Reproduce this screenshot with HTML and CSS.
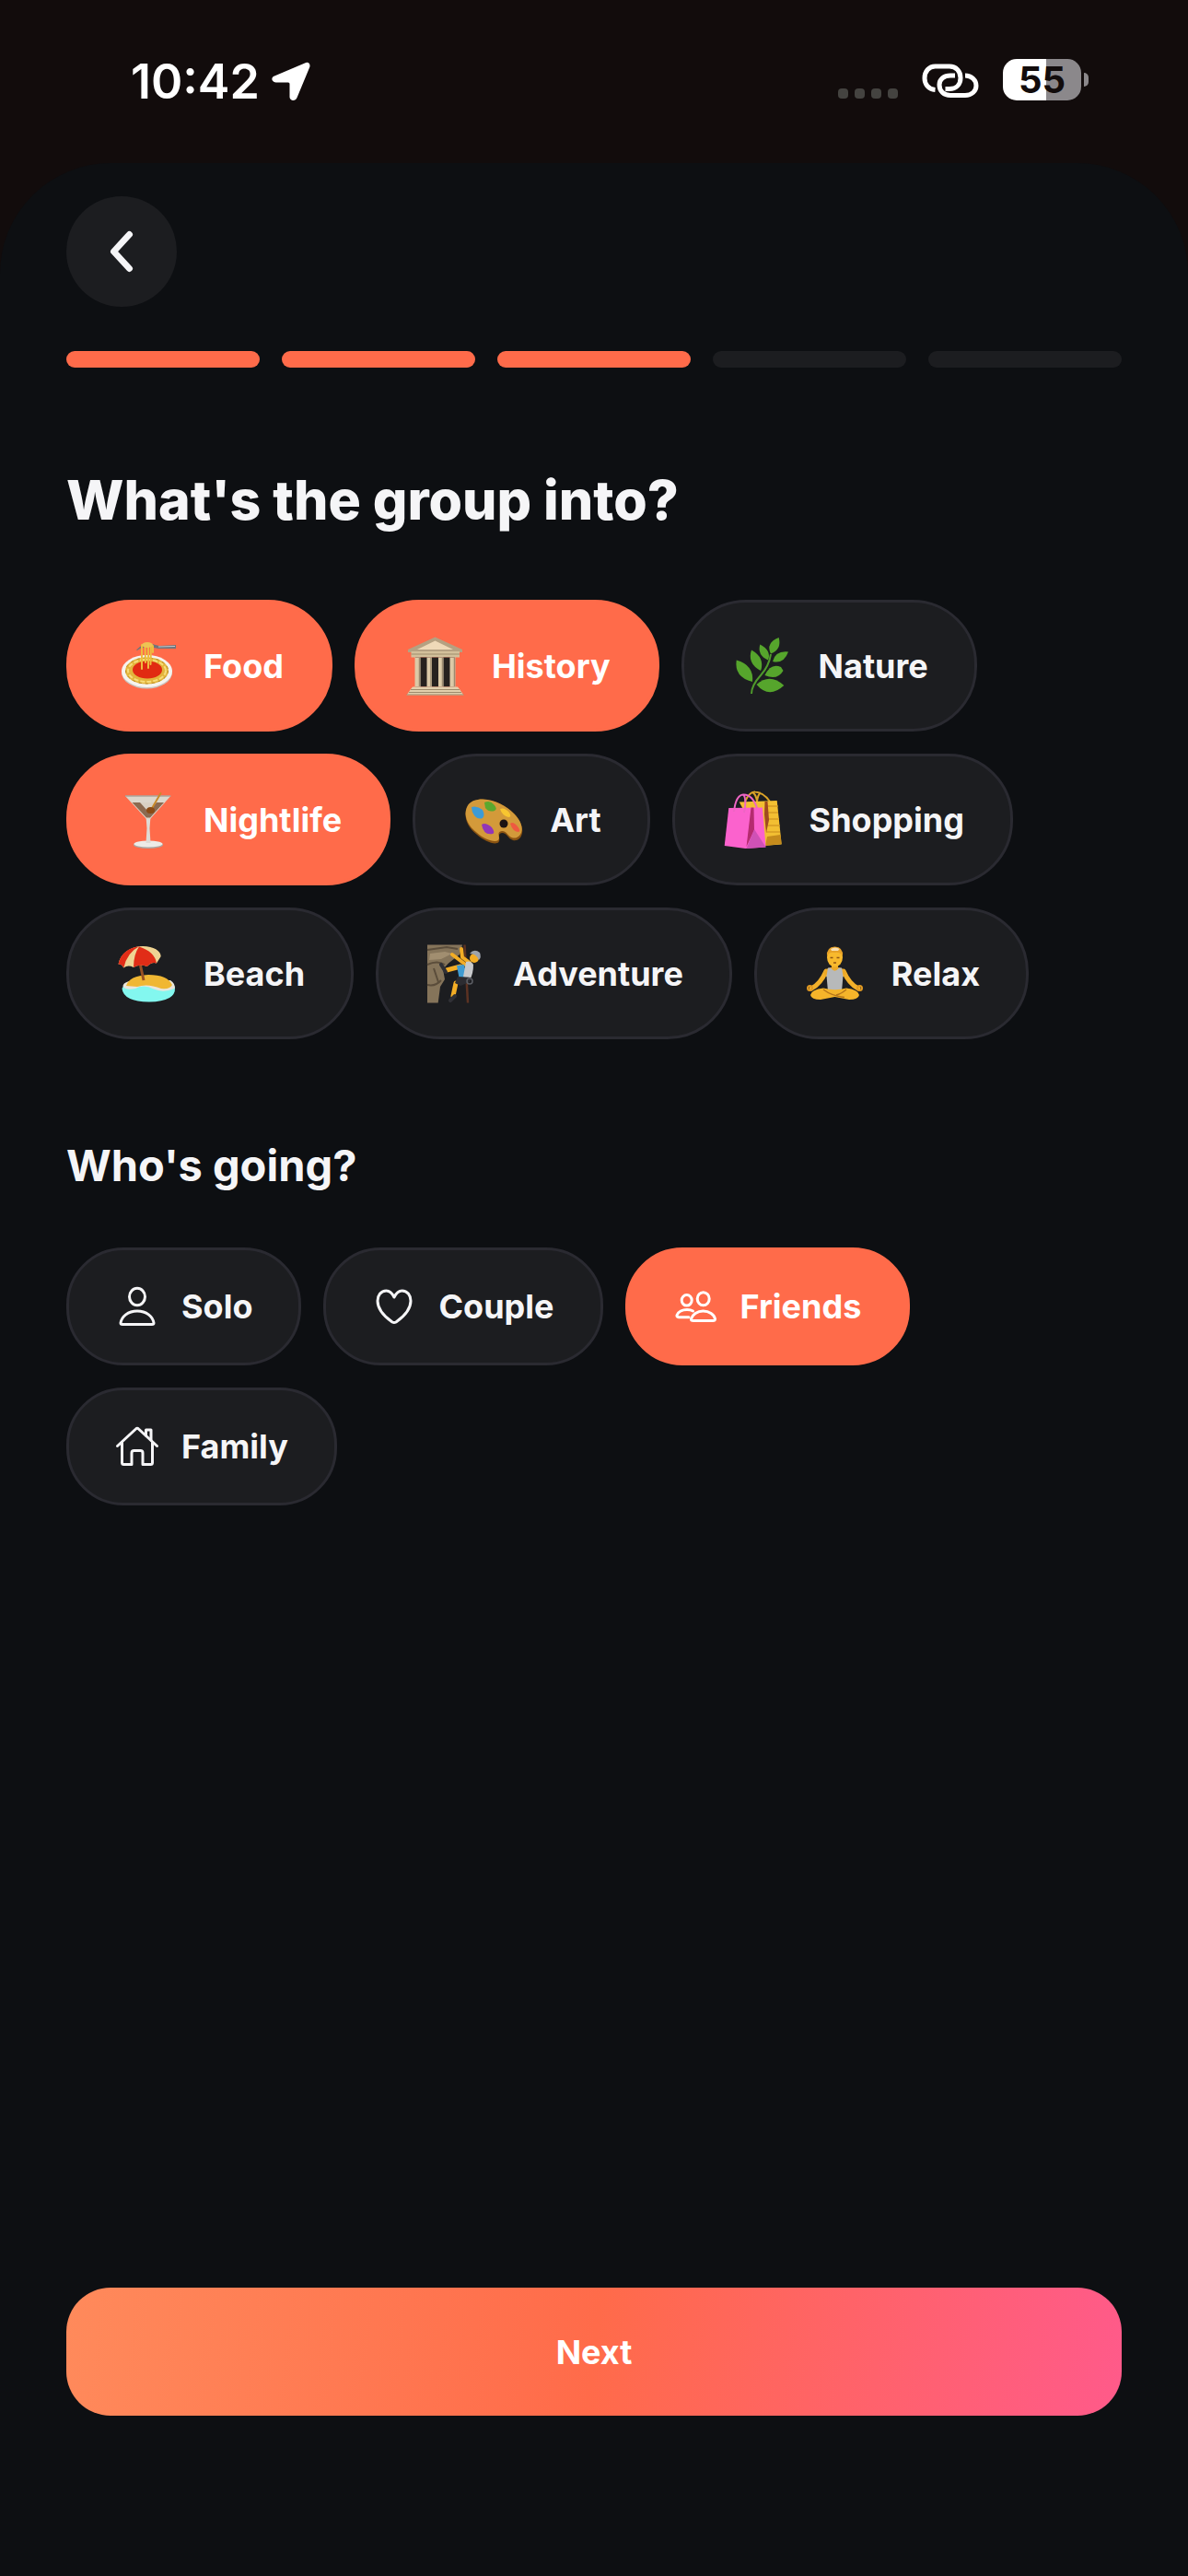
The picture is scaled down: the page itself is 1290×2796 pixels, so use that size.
FILE: index.html
```
<!DOCTYPE html>
<html lang="en">
<head>
    <meta charset="UTF-8">
    <meta name="viewport" content="width=device-width, initial-scale=1.0">
    <title>Trip Planner</title>
    <link rel="stylesheet" href="styles.css">
</head>
<body>
    <header class="status-bar">
        <div class="status-left">
            <span class="time">10:42</span>
            <svg class="location" viewBox="0 0 42 42" aria-hidden="true">
                <path d="M36 1.500 C39.500-.5 42.500 2 41.200 6 L27.500 39 C26 43 20 43 19.500 38.500 V24 Q19.500 22.500 18 22.500 H4.500 C-.5 22-1 17 3 15.500 Z" fill="#fff"/>
            </svg>
        </div>
        <div class="status-right">
            <div class="signal"><i></i><i></i><i></i><i></i></div>
            <svg class="link" viewBox="0 0 62 38" fill="none" stroke="#fff" stroke-width="5" aria-hidden="true">
                <path d="M14.500 29.500 C7 29 3 23 3 17 C3 9 8 4 14.500 4 H30 C37 4 42 9 42 16.500 C42 24 37 28.500 30 28.500 H25.500"/>
                <path d="M47 14 C54 14 59 19 59 25 C59 31 54 35.500 47 35.500 H31 C24 35.500 19 31 19 24 C19 18 24 14 31 14 H36"/>
            </svg>
            <div class="battery"><span class="battery-level">55</span></div>
        </div>
    </header>

    <main class="panel">
        <button class="back" aria-label="Back">
            <svg viewBox="0 0 48 48" fill="none" stroke="#f5f5f7" stroke-width="7" stroke-linecap="round" stroke-linejoin="round">
                <path d="M32.500 5.500 L15.500 24 L32.500 42.500"/>
            </svg>
        </button>

        <div class="steps">
            <span class="step done"></span>
            <span class="step done"></span>
            <span class="step done"></span>
            <span class="step"></span>
            <span class="step"></span>
        </div>

        <h1>What's the group into?</h1>
        <div class="chips interests">
            <button class="chip selected" aria-pressed="true">
                <svg viewBox="0 0 72 72" aria-hidden="true">
                    <ellipse cx="34.500" cy="43" rx="27.500" ry="17.500" fill="#c9c5c0"/>
                    <ellipse cx="34.500" cy="41.500" rx="27.500" ry="17.500" fill="#f6f3ee"/>
                    <ellipse cx="34.500" cy="41" rx="23.500" ry="14.500" fill="#e3b53c"/>
                    <ellipse cx="34.500" cy="41" rx="20.500" ry="12" fill="none" stroke="#f7dc7a" stroke-width="2" stroke-dasharray="5 2"/>
                    <ellipse cx="34.500" cy="41" rx="23" ry="14" fill="none" stroke="#b98a22" stroke-width="1" stroke-dasharray="3 4"/>
                    <ellipse cx="35" cy="40" rx="16" ry="9.500" fill="#e12a12"/>
                    <path d="M23 18.500 Q29 11.500 38 11.500 L48 14 L66 13 V17 L47 17 L37 15 Q29 15 24 19 Z" fill="#70757b"/>
                    <path d="M47 15 L65 14.500" stroke="#c2c7cc" stroke-width="1"/>
                    <path d="M29 13 V39 M32.500 12 L33 32 M36 12 V38 M39 14 L38.500 34 M41 14 V21" stroke="#edbc3f" stroke-width="2" fill="none" stroke-linecap="round"/>
                    <ellipse cx="35" cy="13" rx="6" ry="3" fill="#edc454"/>
                </svg>
                Food
            </button>
            <button class="chip selected" aria-pressed="true">
                <svg viewBox="0 0 72 72" aria-hidden="true">
                    <path d="M34.500 4.500 L64 18 V21 H5 V18 Z" fill="#b5a182"/>
                    <path d="M34.500 8.500 L54 18 H15 Z" fill="#efd9b8"/>
                    <rect x="8.500" y="20" width="52.500" height="6.500" fill="#d3c09b"/>
                    <path d="M8.500 23 H61" stroke="#a08d6c" stroke-width="1"/>
                    <rect x="13" y="26.500" width="43" height="32" fill="#26211e"/>
                    <g fill="#dccaa7">
                        <rect x="12.500" y="26.500" width="6" height="32"/>
                        <rect x="25.500" y="26.500" width="5.500" height="32"/>
                        <rect x="38" y="26.500" width="5.500" height="32"/>
                        <rect x="50.500" y="26.500" width="6" height="32"/>
                    </g>
                    <path d="M17.500 27 V58 M30 27 V58 M42.500 27 V58 M55.500 27 V58" stroke="#9c8b70" stroke-width="1.500"/>
                    <path d="M10 58.500 H59 L61 61 L65.500 67.500 H3.500 L8 61 Z" fill="#e2d0ad"/>
                    <path d="M8 61.500 H61 M6 64.500 H63 M3.500 67 H65.500" stroke="#9c8a6b" stroke-width="1"/>
                </svg>
                History
            </button>
            <button class="chip" aria-pressed="false">
                <svg viewBox="0 0 72 72" aria-hidden="true">
                    <path d="M23 66 Q23 57 33 46 Q42 36 44 23" fill="none" stroke="#4f9a2c" stroke-width="2"/>
                    <g fill="#56a52c">
                        <path d="M6.700 29.500 Q26 35 24 53 Q4 48 6.700 29.500 Z"/>
                        <path d="M23 18.500 Q38 27 33 41 Q18 33 23 18.500 Z"/>
                        <path d="M32.300 12.500 Q45 19 41 29.500 Q29 24 32.300 12.500 Z"/>
                        <path d="M52.700 5 Q56 18 44 22.500 Q38 11 52.700 5 Z"/>
                        <path d="M63 20.500 Q58 34 46 31 Q49 19 63 20.500 Z"/>
                        <path d="M57.500 41 Q51 52 37.500 46 Q44 32 55 37 Z"/>
                        <path d="M58.300 57 Q42 72 28.500 56 Q43 43 58.300 57 Z"/>
                    </g>
                </svg>
                Nature
            </button>
            <button class="chip selected" aria-pressed="true">
                <svg viewBox="0 0 72 72" aria-hidden="true">
                    <ellipse cx="36" cy="63" rx="16" ry="4" fill="#a9a7a3"/>
                    <ellipse cx="36" cy="62" rx="15.500" ry="3.500" fill="#edebe7"/>
                    <path d="M33.500 32 H38.500 L37.500 45 L38.500 61 H33.500 L34.500 45 Z" fill="#dedbd5"/>
                    <path d="M11 10 H60.300 L38 35 H34 Z" fill="#dcd7cc"/>
                    <path d="M18.500 17 H53 L38 33.500 H34 Z" fill="#8b6a50"/>
                    <path d="M27 17 H45 L36 27 Z" fill="#d9d1c4"/>
                    <path d="M11 10 H60.300" stroke="#aaa69e" stroke-width="1.500"/>
                    <path d="M39 25 L49.500 7" stroke="#c98a2a" stroke-width="2" stroke-linecap="round"/>
                    <ellipse cx="38.500" cy="25.500" rx="4.500" ry="3.500" fill="#8a4a14"/>
                </svg>
                Nightlife
            </button>
            <button class="chip" aria-pressed="false">
                <svg viewBox="0 0 72 72" aria-hidden="true">
                    <path d="M4.500 31 C4 19 12 13.500 23 13.500 C37 14 49 21 57 29 C64 36 67 44 66 50 C65 56 61 59 56 58 C50 56 50 50 44 50 C38 51 43 57 40.500 60 C37 64 25 59 17 52 C9 46 5 39 4.500 31 Z" fill="#8a5312"/>
                    <path d="M4.500 29 C5 18 12 13.500 23 13.500 C37 14 49 21 57 29 C64 36 66.500 43 65.500 48 C64 54 60 56 56 55.500 C50 54 50 48 44 48 C37 49 43 55 40 58 C36 61 25 57 17 50 C9 44 5 37 4.500 29 Z" fill="#d39a3a"/>
                    <path d="M11 22 Q17 20 23 25 Q26 31 23 34 Q18 36 14 31 Q11 27 11 22 Z" fill="#3d9bd6"/>
                    <path d="M25 17 Q31 14 35 19 Q40 24 36 26 Q30 28 26 23 Z" fill="#5aa82e"/>
                    <path d="M42 24 Q47 22 52 28 Q55 33 51 33 Q44 31 42 24 Z" fill="#f8c630"/>
                    <path d="M53 40 Q56 37 61 43 Q65 48 62 49 Q56 49 53 40 Z" fill="#ee5a40"/>
                    <path d="M22 41 Q26 38 33 44 Q37 50 34 51 Q24 53 22 41 Z" fill="#9236b8"/>
                    <circle cx="46" cy="40" r="4.500" fill="#1c1312"/>
                </svg>
                Art
            </button>
            <button class="chip" aria-pressed="false">
                <svg viewBox="0 0 72 72" aria-hidden="true">
                    <path d="M26 16 Q31 5 37 5.500 Q46 6 53 16 M39 16 Q38 8 34 6 M39 16 Q40 8 43 6.500" fill="none" stroke="#dca428" stroke-width="2"/>
                    <path d="M19.700 16.500 L60.700 15 L65.700 62.500 L45 64 Z" fill="#f2bf32"/>
                    <path d="M48 21 H61.500 M48 28 H62 M48 35 H63 M49 42 H63.500 M49 49 H64" stroke="#dda426" stroke-width="2"/>
                    <path d="M47.500 16 H50.500 L52 36 L49 50 L47 30 Z" fill="#a04a20"/>
                    <path d="M50 54 L64.500 52 L65.500 62 L48 64 Z" fill="#c58b1c"/>
                    <path d="M8.300 23 L45 22.500 L48.500 65.500 L26.500 67 L3.700 64 Z" fill="#fb62cd"/>
                    <path d="M32.500 22.500 H35.500 L36 47 L27.500 65 Z" fill="#b52b6f"/>
                    <path d="M36 46 L48.500 65.500 L27.500 67 Z" fill="#cf51b5"/>
                    <path d="M14 27 Q16 9 24 8.500 Q34 8 39 23 M25 28 Q28 14 24.500 8.500" fill="none" stroke="#ee65c4" stroke-width="2"/>
                </svg>
                Shopping
            </button>
            <button class="chip" aria-pressed="false">
                <svg viewBox="0 0 72 72" aria-hidden="true">
                    <path d="M7.500 52 Q10 45 36 45 Q62 43 65 51 Q66 66 37 66.500 Q9 66 7.500 52 Z" fill="#83f7ef"/>
                    <path d="M8.500 50 Q8 46 15 44 L60 43 Q66 47 64.500 52 Q52 57 42 52.500 Q31 47 22 52 Q12 54 8.500 50 Z" fill="#e9e6dc"/>
                    <path d="M12 49 Q15 38 36 37 Q57 37 62 48 Q60 53 50 52 Q35 46 24 50 Z" fill="#f0b733"/>
                    <path d="M27.500 27 L31 43" stroke="#9a5124" stroke-width="3"/>
                    <path d="M3.500 25.500 C6 14 16 6 30 6 C42 6 49.500 11 49.700 17 L45 24.500 Q40 22.500 34.700 28 Q27 25 20 29 Q14 26 9.300 29.500 Q7 25 3.500 25.500 Z" fill="#efd493"/>
                    <path d="M3.500 25.500 C6 14 14 8 26 6.300 Q13 13 9.300 29.500 Q7 25 3.500 25.500 Z" fill="#e12d17"/>
                    <path d="M26 6.500 Q20 15 20 29 Q27 25 34.700 28 Q40 22.500 45 24.500 Q43 12 26 6.500 Z" fill="#e12d17"/>
                </svg>
                Beach
            </button>
            <button class="chip" aria-pressed="false">
                <svg viewBox="0 0 72 72" aria-hidden="true">
                    <path d="M3 4.500 H41 L38 15 L26 24.500 L20 31 L22 42 L17 50 L14.700 67.500 H3 Z" fill="#85745a"/>
                    <path d="M3 10 L24 7 L36 9 M3 26 Q14 21 22 26 M3 48 Q12 50 18 43 M10 30 L15 45" fill="none" stroke="#5b4d3b" stroke-width="2"/>
                    <path d="M6 14 L22 12 L30 14 L18 20 L5 21 Z" fill="#a18e70"/>
                    <path d="M43.500 4.500 L47 67.500" stroke="#5c3222" stroke-width="2.500"/>
                    <g fill="none" stroke="#f3ad25" stroke-width="4" stroke-linecap="round" stroke-linejoin="round">
                        <path d="M49 24 L41 18 L40 9"/>
                        <path d="M47 28 L38 21 L30 15"/>
                        <path d="M39 28 L24 32" stroke-width="5"/>
                        <path d="M34 46 L31 60" stroke-width="5"/>
                    </g>
                    <path d="M35 27 L43 26 L46 40 L38 43 Z" fill="#3f9bd1"/>
                    <path d="M45 23 Q50 21 53 26 Q53 36 49 43 L42 39 Z" fill="#c8c9cb"/>
                    <path d="M36 39 L51 40 L49 45 L39 49 L33 46 Z" fill="#2c2c31"/>
                    <circle cx="54" cy="19" r="5" fill="#f3ad25"/>
                    <path d="M49 14 Q54 8 60 13 Q62 18 59 21 Q56 14 49 14 Z" fill="#9da3ab"/>
                    <path d="M18 26 L23 34 M28 65 L33 60" stroke="#303036" stroke-width="4" stroke-linecap="round"/>
                    <circle cx="49" cy="44" r="3" fill="none" stroke="#5c5e64" stroke-width="1.500"/>
                </svg>
                Adventure
            </button>
            <button class="chip" aria-pressed="false">
                <svg viewBox="0 0 72 72" aria-hidden="true">
                    <path d="M25 33 Q19 47 9 52 M44 33 Q50 47 60 52" fill="none" stroke="#f2b02a" stroke-width="5" stroke-linecap="round"/>
                    <circle cx="7.500" cy="51.500" r="2.500" fill="none" stroke="#e29a22" stroke-width="2"/>
                    <circle cx="61.500" cy="51.500" r="2.500" fill="none" stroke="#e29a22" stroke-width="2"/>
                    <path d="M31 24 H38 V29 Q45 30 47 35 L44 39 H25 L22 35 Q24 30 31 29 Z" fill="#eda927"/>
                    <path d="M27 29.500 H30 Q34.500 36 39 29.500 H42 L43.500 38 L42 55 H27 L25.500 38 Z" fill="#b7b9ba"/>
                    <path d="M8 59 Q9 53 22 51.500 Q35 55 47 51.500 Q60 53 61 59 Q60 64 50 64 L34.500 61 L19 64 Q9 64 8 59 Z" fill="#f5b42a"/>
                    <path d="M22 53 Q31 60 45 61.500 M47 53 Q41 58 36 59" fill="none" stroke="#b7761a" stroke-width="1.500"/>
                    <ellipse cx="34.500" cy="18" rx="8.500" ry="10.500" fill="#f8b92d"/>
                    <path d="M26 17 Q25 7 34.500 6.500 Q44 7 43 17 Q41 12 34 13 Q28 12 26 17 Z" fill="#e7a127"/>
                    <path d="M30 9 Q35 6 39.500 9 L38 11 H31 Z" fill="#f8dfb2"/>
                    <path d="M29.500 18.500 H32.500 M36.500 18.500 H39.500 M33 24 H36" stroke="#8e5615" stroke-width="1.500"/>
                </svg>
                Relax
            </button>
        </div>

        <h2>Who's going?</h2>
        <div class="chips people">
            <button class="chip" aria-pressed="false">
                <svg viewBox="0 0 48 48" aria-hidden="true">
                    <ellipse cx="24" cy="13.500" rx="8.500" ry="9.200"/>
                    <path d="M24 29 C34 29 41 35 42 42 Q42 43.500 40 43.500 H8 Q6 43.500 6 42 C7 35 14 29 24 29 Z"/>
                </svg>
                Solo
            </button>
            <button class="chip" aria-pressed="false">
                <svg viewBox="0 0 48 48" aria-hidden="true">
                    <path d="M24 14 C21 8 18 7 15.500 7 C9.500 7 6 12 6 18 C6 26 12 34 22 41 Q24 42 26 41 C36 34 42 26 42 18 C42 12 38.500 7 32.500 7 C30 7 27 8 24 14 Z"/>
                </svg>
                Couple
            </button>
            <button class="chip selected" aria-pressed="true">
                <svg viewBox="0 0 48 48" aria-hidden="true">
                    <ellipse cx="31.700" cy="15.700" rx="6.500" ry="7"/>
                    <path d="M31.500 29 C38 29 43.500 33 44.500 37.500 Q44.500 39.500 42 39.500 H21 Q18 39.500 18.500 37.500 C20 33 25 29 31.500 29 Z"/>
                    <ellipse cx="13.700" cy="17.300" rx="5.500" ry="5.800"/>
                    <path d="M16 35.800 H5 Q2.500 35.500 3 33.500 C4.500 30 9 27.500 14 27.500 Q18 27.500 20.500 29"/>
                </svg>
                Friends
            </button>
            <button class="chip" aria-pressed="false">
                <svg viewBox="0 0 48 48" aria-hidden="true">
                    <path d="M2.500 23.500 L22.500 5 Q24 3.500 25.500 5 L45.500 23.500"/>
                    <path d="M7.500 20 V41.500 Q7.500 43.500 9.500 43.500 H18 V31 Q18 28.500 20.500 28.500 H27.500 Q30 28.500 30 31 V43.500 H38.500 Q40.500 43.500 40.500 41.500 V20"/>
                    <path d="M33.500 12 V6 H39 V17"/>
                </svg>
                Family
            </button>
        </div>

        <button class="next">Next</button>
    </main>
</body>
</html>
```
FILE: styles.css
```
* {
    box-sizing: border-box;
}

body {
    margin: 0;
    min-height: 100vh;
    display: flex;
    flex-direction: column;
    background-color: #120c0c;
    color: #f5f5f7;
    font-family: Inter, "Liberation Sans", sans-serif;
}

button {
    border: none;
    padding: 0;
    font-family: inherit;
    color: inherit;
    cursor: pointer;
}

/* status bar */
.status-bar {
    display: flex;
    justify-content: space-between;
    height: 177px;
    padding: 64px 108px 0 142px;
    color: #fff;
}

.status-left,
.status-right {
    display: flex;
    align-items: center;
    height: 48px;
}

.status-left {
    gap: 13px;
}

.time {
    font-size: 52px;
    font-weight: 600;
}

.location {
    width: 42px;
    height: 42px;
}

.status-right {
    gap: 26px;
    height: 45px;
}

.signal {
    display: flex;
    gap: 7px;
    padding-top: 29px;
}

.signal i {
    width: 11px;
    height: 11px;
    border-radius: 4px;
    background-color: #444340;
}

.link {
    width: 62px;
    height: 38px;
}

.battery {
    display: flex;
    align-items: center;
    gap: 3px;
}

.battery-level {
    width: 85px;
    height: 45px;
    border-radius: 15px;
    background: linear-gradient(90deg, #fff 55%, #8b888b 55%);
    color: #120c0c;
    font-size: 40px;
    font-weight: 700;
    line-height: 45px;
    text-align: center;
}

.battery::after {
    content: "";
    width: 5px;
    height: 15px;
    border-radius: 0 5px 5px 0;
    background-color: #8b888b;
}

/* sheet */
.panel {
    flex: 1;
    display: flex;
    flex-direction: column;
    padding: 36px 72px 174px;
    border-radius: 120px 120px 0 0;
    background-color: #0d0f12;
}

.back {
    display: flex;
    justify-content: center;
    align-items: center;
    width: 120px;
    height: 120px;
    border-radius: 50%;
    background-color: #1c1d20;
}

.back svg {
    width: 48px;
    height: 48px;
}

.steps {
    display: flex;
    gap: 24px;
    margin-top: 48px;
}

.step {
    flex: 1;
    height: 18px;
    border-radius: 9px;
    background-color: #1c1d20;
}

.step.done {
    background-color: #ff6b4a;
}

h1 {
    margin: 108px 0 72px;
    font-size: 59px;
    font-weight: 800;
    line-height: 72px;
}

h2 {
    margin: 108px 0 60px;
    font-size: 47px;
    font-weight: 700;
    line-height: 58px;
}

.chips {
    display: flex;
    flex-wrap: wrap;
    gap: 24px;
}

.chip {
    display: flex;
    align-items: center;
    gap: 24px;
    padding: 0 50px;
    border: 3px solid #2a2a31;
    background-color: #1c1d20;
    font-size: 36px;
    font-weight: 700;
}

.chip.selected {
    border-color: #ff6b4a;
    background-color: #ff6b4a;
    color: #fff;
}

.interests .chip {
    height: 143px;
    border-radius: 70px;
}

.interests svg {
    width: 72px;
    height: 72px;
}

.people .chip {
    height: 128px;
    border-radius: 62px;
}

.people svg {
    width: 48px;
    height: 48px;
    fill: none;
    stroke: currentColor;
    stroke-width: 3;
    stroke-linecap: round;
    stroke-linejoin: round;
}

.next {
    height: 139px;
    margin-top: auto;
    border-radius: 48px;
    background: linear-gradient(97deg, #ff8a5b, #ff6b4a 50%, #ff5a8a);
    color: #fff;
    font-size: 36px;
    font-weight: 700;
}
```
